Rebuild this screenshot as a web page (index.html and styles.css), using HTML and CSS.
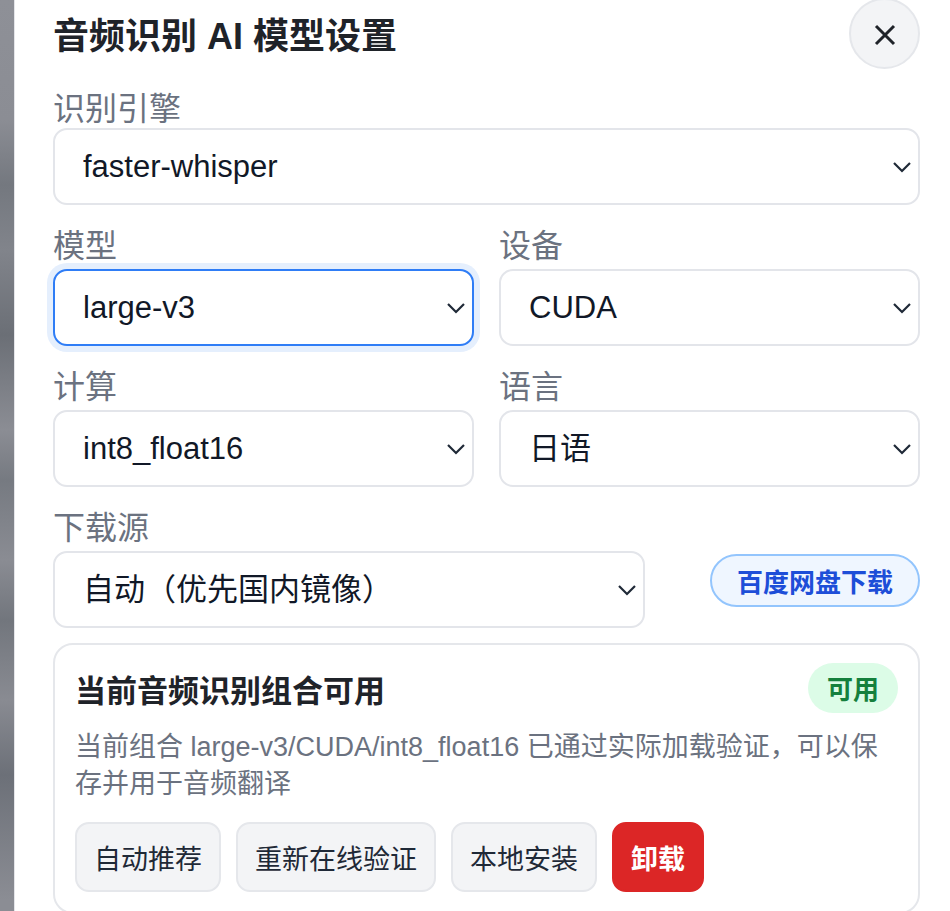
FILE: index.html
```html
<!DOCTYPE html>
<html lang="zh-CN">

<head>
  <meta charset="UTF-8" />
  <meta name="viewport" content="width=device-width, initial-scale=1.0" />
  <title>音频识别 AI 模型设置</title>
  <link rel="stylesheet" href="styles.css">
</head>

<body>
  <div class="screen">
    <div class="backdrop"></div>
    <div class="panel">
      <div class="panel-head">
        <h2 class="panel-title">音频识别 AI 模型设置</h2>
        <button class="close-btn" aria-label="关闭">
          <svg width="22" height="22" viewBox="0 0 22 22">
            <path d="M2 2L20 20M20 2L2 20" />
          </svg>
        </button>
      </div>

      <div class="form">
        <div class="field field-wide field-first">
          <label class="field-label">识别引擎</label>
          <div class="select-box">
            <select class="field-select">
              <option>faster-whisper</option>
            </select>
            <svg class="select-arrow" viewBox="0 0 20 12"><path d="M2 2l8 8 8-8" /></svg>
          </div>
        </div>

        <div class="field">
          <label class="field-label">模型</label>
          <div class="select-box">
            <select class="field-select is-active">
              <option>large-v3</option>
            </select>
            <svg class="select-arrow" viewBox="0 0 20 12"><path d="M2 2l8 8 8-8" /></svg>
          </div>
        </div>
        <div class="field">
          <label class="field-label">设备</label>
          <div class="select-box">
            <select class="field-select">
              <option>CUDA</option>
            </select>
            <svg class="select-arrow" viewBox="0 0 20 12"><path d="M2 2l8 8 8-8" /></svg>
          </div>
        </div>

        <div class="field">
          <label class="field-label">计算</label>
          <div class="select-box">
            <select class="field-select">
              <option>int8_float16</option>
            </select>
            <svg class="select-arrow" viewBox="0 0 20 12"><path d="M2 2l8 8 8-8" /></svg>
          </div>
        </div>
        <div class="field">
          <label class="field-label">语言</label>
          <div class="select-box">
            <select class="field-select">
              <option>日语</option>
            </select>
            <svg class="select-arrow" viewBox="0 0 20 12"><path d="M2 2l8 8 8-8" /></svg>
          </div>
        </div>

        <div class="field field-wide">
          <label class="field-label">下载源</label>
          <div class="source-row">
            <div class="select-box">
              <select class="field-select">
                <option>自动（优先国内镜像）</option>
              </select>
              <svg class="select-arrow" viewBox="0 0 20 12"><path d="M2 2l8 8 8-8" /></svg>
            </div>
            <button class="pan-btn">百度网盘下载</button>
          </div>
        </div>
      </div>

      <div class="status-card">
        <div class="status-head">
          <h3 class="status-title">当前音频识别组合可用</h3>
          <span class="status-tag">可用</span>
        </div>
        <p class="status-desc">当前组合 large-v3/CUDA/int8_float16 已通过实际加载验证，可以保存并用于音频翻译</p>
        <div class="status-actions">
          <button class="act-btn">自动推荐</button>
          <button class="act-btn">重新在线验证</button>
          <button class="act-btn">本地安装</button>
          <button class="act-btn act-danger">卸载</button>
        </div>
      </div>
    </div>
  </div>
</body>

</html>
```

FILE: styles.css
```css
html,
body {
  height: 100%;
  margin: 0;
  overflow: hidden;
}

body {
  font-family: "Liberation Sans", "Noto Sans CJK SC", sans-serif;
  color: #1f2329;
  background: #fff;
}

.screen {
  display: flex;
  height: 100%;
}

/* 弹窗后面被遮住的页面 */
.backdrop {
  flex: 0 0 14px;
  background: linear-gradient(to bottom,
      #8e9097 0,
      #8b8d94 120px,
      #74787f 185px,
      #81848b 250px,
      #6b6f76 335px,
      #8b8d94 430px,
      #767a81 480px,
      #8a8c93 560px,
      #72767d 620px,
      #898b92 700px,
      #6c7078 775px,
      #8b8d94 900px);
}

.panel {
  flex: 1;
  background: #fff;
  border-left: 1px solid #e4e5e9;
  padding: 0 30px 0 38px;
}

.panel-head {
  display: flex;
  justify-content: space-between;
  align-items: center;
  height: 70px;
  margin-top: -2px;
}

.panel-title {
  margin: 0;
  font-size: 36px;
  font-weight: 700;
  color: #1f2329;
}

.close-btn {
  width: 71px;
  height: 71px;
  border: 2px solid #e5e7eb;
  border-radius: 50%;
  background: #f3f4f6;
  display: flex;
  align-items: center;
  justify-content: center;
  padding: 0;
  cursor: pointer;
}

.close-btn svg {
  margin-top: 4px;
}

.close-btn path {
  stroke: #1f2329;
  stroke-width: 3;
  fill: none;
}

.form {
  display: grid;
  grid-template-columns: 1fr 1fr;
  column-gap: 25px;
  row-gap: 18px;
  margin-top: 18px;
}

.field-wide {
  grid-column: 1 / -1;
}

.field-label {
  display: block;
  font-family: "Noto Sans CJK SC", sans-serif;
  font-size: 32px;
  line-height: 40px;
  color: #6b7280;
  margin-bottom: 6px;
}

.field-first .field-label {
  margin-bottom: 2px;
}

.select-box {
  position: relative;
}

.field-select {
  appearance: none;
  -webkit-appearance: none;
  display: block;
  width: 100%;
  height: 77px;
  box-sizing: border-box;
  padding: 0 40px 0 28px;
  border: 2px solid #e3e5ea;
  border-radius: 14px;
  background: #fff;
  font-family: "Liberation Sans", "Noto Sans CJK SC", sans-serif;
  font-size: 31px;
  color: #111827;
  outline: none;
}

/* 当前获得焦点的下拉框 */
.field-select.is-active {
  border-color: #2f7df6;
  box-shadow: 0 0 0 6px #e5effd;
}

.select-arrow {
  position: absolute;
  right: 8px;
  top: 50%;
  width: 20px;
  height: 12px;
  transform: translateY(-50%);
  pointer-events: none;
  fill: none;
  stroke: #1f2937;
  stroke-width: 2.2;
}

.source-row {
  display: grid;
  grid-template-columns: 1fr 210px;
  column-gap: 65px;
}

.pan-btn {
  align-self: start;
  margin-top: 3px;
  height: 53px;
  border: 2px solid #93c5fd;
  border-radius: 27px;
  background: #eff6ff;
  color: #1d4ed8;
  font-family: "Noto Sans CJK SC", sans-serif;
  font-size: 26px;
  font-weight: 700;
  cursor: pointer;
}

.status-card {
  margin-top: 15px;
  border: 2px solid #e5e7eb;
  border-radius: 20px;
  padding: 18px 20px 20px;
}

.status-head {
  display: flex;
  justify-content: space-between;
  align-items: center;
  height: 50px;
}

.status-title {
  margin: 0;
  font-family: "Noto Sans CJK SC", sans-serif;
  font-size: 31px;
  font-weight: 700;
  color: #1f2329;
}

.status-tag {
  height: 50px;
  line-height: 50px;
  padding: 0 19px;
  border-radius: 25px;
  background: #dcfce7;
  color: #15803d;
  font-family: "Noto Sans CJK SC", sans-serif;
  font-size: 26px;
  font-weight: 700;
}

.status-desc {
  margin: 16px 0 0;
  font-size: 27px;
  line-height: 37px;
  color: #6b7280;
}

.status-actions {
  display: flex;
  gap: 15px;
  margin-top: 19px;
}

.act-btn {
  height: 70px;
  padding: 0 17px;
  border: 2px solid #e5e7eb;
  border-radius: 14px;
  background: #f3f4f6;
  color: #1f2937;
  font-family: "Noto Sans CJK SC", sans-serif;
  font-size: 27px;
  cursor: pointer;
}

.act-danger {
  background: #dc2626;
  border-color: #dc2626;
  color: #fff;
  font-weight: 700;
}
```
